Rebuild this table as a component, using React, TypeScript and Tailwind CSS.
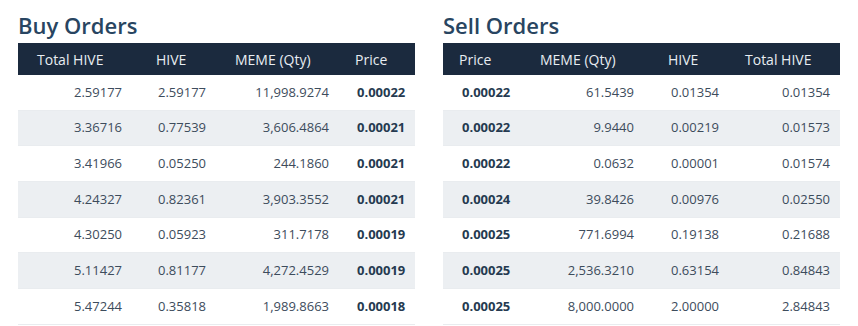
import React from 'react';

type Col = { label: string; head: string; cell: string; bold?: boolean };

const buyCols: Col[] = [
  { label: 'Total HIVE', head: 'pl-[19px]', cell: 'text-right pr-[16px]' },
  { label: 'HIVE', head: 'pl-[18px]', cell: 'pl-[20px]' },
  { label: 'MEME (Qty)', head: 'pl-[17px]', cell: 'text-right pr-[9px]' },
  { label: 'Price', head: 'pl-[17px]', cell: 'pl-[19px]', bold: true },
];

const sellCols: Col[] = [
  { label: 'Price', head: 'pl-[16px]', cell: 'pl-[19px]', bold: true },
  { label: 'MEME (Qty)', head: 'pl-[17px]', cell: 'text-right pr-[9px]' },
  { label: 'HIVE', head: 'pl-[25px]', cell: 'pl-[28px]' },
  { label: 'Total HIVE', head: 'pl-[22px]', cell: 'text-right pr-[10px]' },
];

const buyRows = [
  ['2.59177', '2.59177', '11,998.9274', '0.00022'],
  ['3.36716', '0.77539', '3,606.4864', '0.00021'],
  ['3.41966', '0.05250', '244.1860', '0.00021'],
  ['4.24327', '0.82361', '3,903.3552', '0.00021'],
  ['4.30250', '0.05923', '311.7178', '0.00019'],
  ['5.11427', '0.81177', '4,272.4529', '0.00019'],
  ['5.47244', '0.35818', '1,989.8663', '0.00018'],
];

const sellRows = [
  ['0.00022', '61.5439', '0.01354', '0.01354'],
  ['0.00022', '9.9440', '0.00219', '0.01573'],
  ['0.00022', '0.0632', '0.00001', '0.01574'],
  ['0.00024', '39.8426', '0.00976', '0.02550'],
  ['0.00025', '771.6994', '0.19138', '0.21688'],
  ['0.00025', '2,536.3210', '0.63154', '0.84843'],
  ['0.00025', '8,000.0000', '2.00000', '2.84843'],
];

function OrderTable({ title, cols, rows, grid }: { title: string; cols: Col[]; rows: string[][]; grid: string }) {
  return (
    <div className="w-[397px]">
      <h2 className="text-[22px] leading-[30px] font-semibold text-[#284561] mt-[10px] mb-[3px]">{title}</h2>
      <div className={`grid ${grid} bg-[#1b2a3e] h-[32px] items-center text-[14px] text-[#e8edf2]`}>
        {cols.map((c) => (
          <div key={c.label} className={c.head}>{c.label}</div>
        ))}
      </div>
      {rows.map((r, i) => (
        <div
          key={i}
          className={`grid ${grid} h-[35.7px] items-center text-[13px] text-[#3d4c5c] border-b border-[#e9ecef] ${i % 2 === 1 ? 'bg-[#eceff2]' : 'bg-white'}`}
        >
          {r.map((v, j) => (
            <div key={j} className={`${cols[j].cell} ${cols[j].bold ? 'font-bold text-[#253a50]' : ''}`}>{v}</div>
          ))}
        </div>
      ))}
    </div>
  );
}

export default function App() {
  return (
    <div className="w-[858px] h-[326px] overflow-hidden bg-white flex gap-[28px] pl-[18px] font-['Open_Sans',sans-serif]">
      <OrderTable title="Buy Orders" cols={buyCols} rows={buyRows} grid="grid-cols-[120px_80px_120px_76px]" />
      <OrderTable title="Sell Orders" cols={sellCols} rows={sellRows} grid="grid-cols-[80px_120px_80px_117px]" />
    </div>
  );
}
